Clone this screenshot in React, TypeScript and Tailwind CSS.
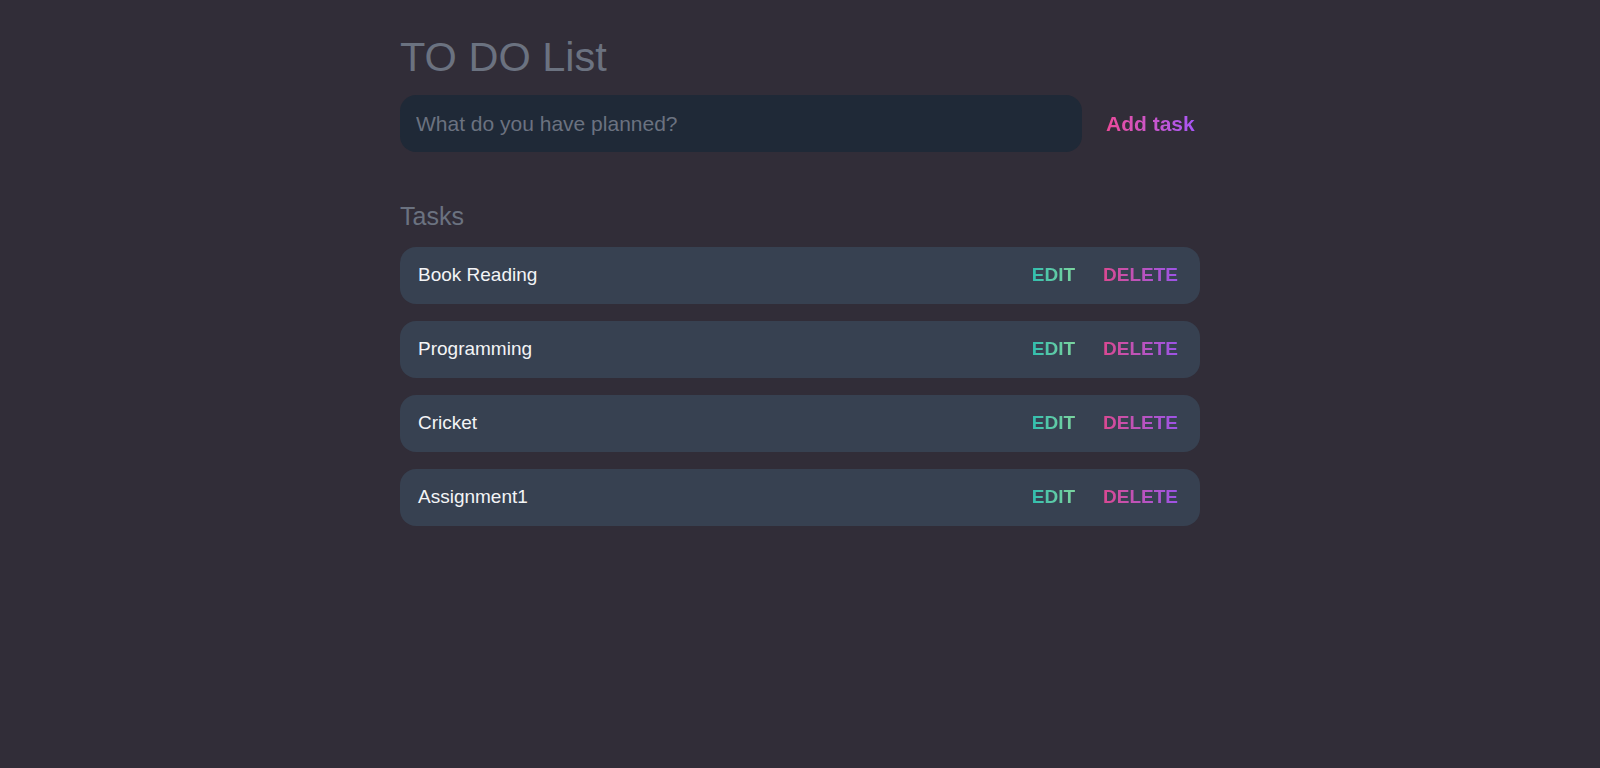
const tasks = ["Book Reading", "Programming", "Cricket", "Assignment1"];

export default function App() {
  return (
    <div className="min-h-screen w-full bg-[#312d38] font-['Liberation_Sans',Arial,sans-serif]">
      <div className="mx-auto max-w-[800px] pt-[36px]">
        <h1 className="text-[41.5px] leading-[41px] text-[#6b7280]">TO DO List</h1>

        <div className="mt-[18px] flex items-center">
          <input
            type="text"
            placeholder="What do you have planned?"
            className="h-[57px] w-[682px] rounded-2xl bg-[#1f2937] px-4 pt-px text-[21px] text-gray-200 outline-none placeholder:text-[#6b7280]"
          />
          <button className="ml-[24px] bg-gradient-to-r from-[#ec4899] to-[#a855f7] bg-clip-text text-[21px] font-bold text-transparent">
            Add task
          </button>
        </div>

        <h2 className="mt-[48px] text-[25px] leading-8 text-[#6b7280]">Tasks</h2>

        <div className="mt-[15px] flex flex-col gap-[17px]">
          {tasks.map((t) => (
            <div
              key={t}
              className="flex h-[57px] items-center justify-between rounded-2xl bg-[#374151] pl-[18px] pr-[22px]"
            >
              <span className="text-[19px] text-[#f3f4f6]">{t}</span>
              <div className="flex items-center gap-[28px]">
                <button className="bg-gradient-to-r from-[#2dd4bf] to-[#86efac] bg-clip-text text-[19px] font-bold text-transparent opacity-85">
                  EDIT
                </button>
                <button className="bg-gradient-to-r from-[#ec4899] to-[#a855f7] bg-clip-text text-[19px] font-bold text-transparent opacity-90">
                  DELETE
                </button>
              </div>
            </div>
          ))}
        </div>
      </div>
    </div>
  );
}
